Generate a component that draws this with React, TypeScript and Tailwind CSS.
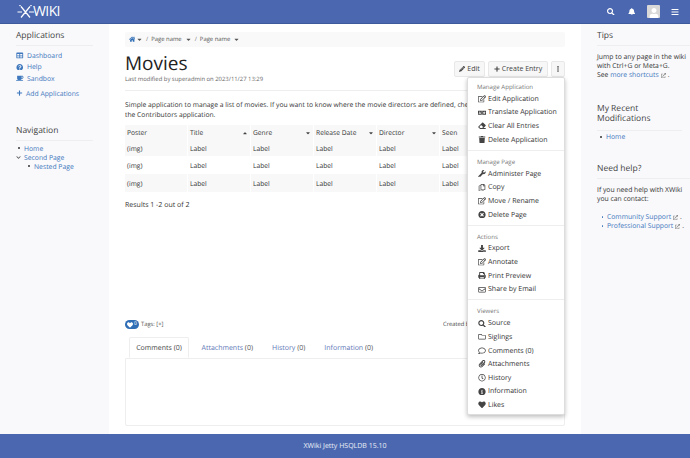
import React from 'react'
import {
  FaBars, FaBell, FaCoffee, FaDownload, FaEllipsisV, FaEraser, FaExternalLinkAlt, FaHeart, FaHome,
  FaInfoCircle, FaLanguage, FaPaperclip, FaPencilAlt, FaPlus, FaPrint, FaQuestionCircle, FaRegClock,
  FaRegComment, FaRegCopy, FaRegEdit, FaRegEnvelope, FaRegFolder, FaSearch, FaTable, FaTimesCircle,
  FaTrash, FaUser, FaWrench, FaCaretDown, FaCaretUp, FaChevronDown,
} from 'react-icons/fa'

const menu = [
  { title: 'Manage Application', items: [[FaRegEdit, 'Edit Application'], [FaLanguage, 'Translate Application'], [FaEraser, 'Clear All Entries'], [FaTrash, 'Delete Application']] },
  { title: 'Manage Page', items: [[FaWrench, 'Administer Page'], [FaRegCopy, 'Copy'], [FaRegEdit, 'Move / Rename'], [FaTimesCircle, 'Delete Page']] },
  { title: 'Actions', items: [[FaDownload, 'Export'], [FaRegEdit, 'Annotate'], [FaPrint, 'Print Preview'], [FaRegEnvelope, 'Share by Email']] },
  { title: 'Viewers', items: [[FaSearch, 'Source'], [FaRegFolder, 'Siglings'], [FaRegComment, 'Comments (0)'], [FaPaperclip, 'Attachments'], [FaRegClock, 'History'], [FaInfoCircle, 'Information'], [FaHeart, 'Likes']] },
] as const

const columns = ['Poster', 'Title', 'Genre', 'Release Date', 'Director', 'Seen']

function Logo() {
  return (
    <div className="flex items-center text-white">
      <svg width="17" height="14" viewBox="0 0 17 14" stroke="currentColor" strokeWidth="1.2" fill="none">
        <path d="M4 1.5 13 12.5M13 1.5 4 12.5M0.5 7H5M12 7h5M3.5 1 2.5 0M13.5 1l1-1" />
      </svg>
      <span className="text-[14px] leading-none tracking-[-0.6px] -ml-px">WIKI</span>
    </div>
  )
}

function PanelTitle({ children }: { children: React.ReactNode }) {
  return <h2 className="text-[8.5px] leading-[11px] text-[#444] pb-[4px] border-b border-[#eeeeee]">{children}</h2>
}

function Crumb({ label }: { label: string }) {
  return (
    <span className="flex items-center gap-[3px]">
      <span className="text-[#777]">/</span>
      <span>{label}</span>
      <FaCaretDown className="text-[7px] text-[#555]" />
    </span>
  )
}

function External() {
  return <FaExternalLinkAlt className="inline text-[5px] text-[#888] mx-[2px]" />
}

function Tab({ label, count, active }: { label: string; count: number; active?: boolean }) {
  if (active) {
    return (
      <div className="h-[21px] w-[60px] mr-[3px] pt-[4px] flex items-center justify-center bg-white border border-[#eeeeee] border-b-white rounded-t-[2px] -mb-px text-[#444]">
        {label} ({count})
      </div>
    )
  }
  return (
    <div className="h-[21px] px-[9.5px] pt-[4px] flex items-center text-[#5f78b8]">
      {label}&nbsp;<span className="text-[#555]">({count})</span>
    </div>
  )
}

export default function App() {
  return (
    <div className="h-[458px] w-[690px] flex flex-col overflow-hidden bg-white text-[7px] text-[#333] font-['Open_Sans',sans-serif] [text-rendering:geometricPrecision]">
      <header className="h-[24px] shrink-0 bg-[#4a67af] border-b border-[#3f5a9c] flex items-center pl-[17px] pr-[11px]">
        <Logo />
        <div className="ml-auto flex items-center text-white">
          <FaSearch className="text-[7.5px] mr-[13.5px]" />
          <FaBell className="text-[7.5px] mr-[11.5px]" />
          <div className="w-[13px] h-[13px] bg-[#d8d8d8] rounded-[1px] flex items-end justify-center overflow-hidden mr-[11px]">
            <FaUser className="text-[10px] text-white" />
          </div>
          <FaBars className="text-[8px]" />
        </div>
      </header>

      <div className="flex-1 flex min-h-0">
        <aside className="w-[109px] shrink-0 bg-[#f9f9fb] pl-[16px] pr-[16px] pt-[6px]">
          <PanelTitle>Applications</PanelTitle>
          <ul className="mt-[4px] text-[6.8px] text-[#3f78bd] leading-[11.3px]">
            <li className="flex items-center gap-[3.5px]"><FaTable className="w-[7.5px] text-[#3f78bd]" /><span>Dashboard</span></li>
            <li className="flex items-center gap-[3.5px]"><FaQuestionCircle className="w-[7.5px]" /><span>Help</span></li>
            <li className="flex items-center gap-[3.5px]"><FaCoffee className="w-[7.5px]" /><span>Sandbox</span></li>
          </ul>
          <div className="mt-[4px] flex items-center gap-[3px] text-[6.8px] text-[#3f78bd] leading-[11px]">
            <FaPlus className="w-[7px] text-[6px]" />Add Applications
          </div>

          <div className="mt-[26px]">
            <PanelTitle>Navigation</PanelTitle>
          </div>
          <ul className="mt-[3px] text-[6.8px] text-[#3f78bd] leading-[9px]">
            <li className="flex items-center gap-[4px] pl-[2px]"><span className="w-[2px] h-[2px] rounded-full bg-[#333]" />Home</li>
            <li className="flex items-center gap-[3px]"><FaChevronDown className="text-[5px] text-[#555]" />Second Page</li>
            <li className="flex items-center gap-[4px] pl-[12px]"><span className="w-[2px] h-[2px] rounded-full bg-[#333]" />Nested Page</li>
          </ul>
        </aside>

        <main className="relative flex-1 min-w-0 pl-[16px] pr-[16px] pt-[8px] flex flex-col">
          <nav className="h-[15px] bg-[#f9f9f9] rounded-[2px] flex items-center gap-[3px] pl-[3.5px] text-[5.9px] text-[#555]">
            <FaHome className="text-[6.5px] text-[#2f6db5]" />
            <FaCaretDown className="text-[7px] text-[#555] -ml-[2px]" />
            <Crumb label="Page name" />
            <Crumb label="Page name" />
          </nav>

          <div className="flex items-start">
            <div>
              <h1 className="text-[19px] leading-[24px] mt-[4px] text-[#222]">Movies</h1>
              <p className="text-[5.9px] leading-[9px] text-[#666]">Last modified by superadmin on 2023/11/27 13:29</p>
            </div>
            <div className="ml-auto mt-[14px] flex items-center gap-[3px] text-[#444]">
              <button className="h-[15.5px] w-[31px] flex items-center justify-center gap-[2px] bg-[#f7f7f7] border border-[#e8e8e8] rounded-[2px]">
                <FaPencilAlt className="text-[6px]" />Edit
              </button>
              <button className="h-[15.5px] w-[60px] flex items-center justify-center gap-[2px] bg-[#f7f7f7] border border-[#e8e8e8] rounded-[2px]">
                <FaPlus className="text-[6px]" />Create Entry
              </button>
              <button className="h-[15.5px] w-[14px] flex items-center justify-center bg-[#f7f7f7] border border-[#e8e8e8] rounded-[2px]">
                <FaEllipsisV className="text-[6px]" />
              </button>
            </div>
          </div>

          <div className="border-t border-[#eeeeee] mt-[6px]" />
          <p className="mt-[9px] text-[6.75px] leading-[9.5px] whitespace-nowrap overflow-hidden">
            Simple application to manage a list of movies. If you want to know where the movie directors are defined, check<br />
            the <span className="border-b border-dotted border-[#555]">Contributors</span> application.
          </p>

          <table className="mt-[6px] w-[378px] table-fixed border-separate border-spacing-0 text-[6.7px]">
            <thead>
              <tr>
                {columns.map((c, i) => (
                  <th key={c} className="h-[15px] bg-[#f8f8f8] border-r border-white pl-[2px] pr-[2px] pt-[2px] text-left font-normal">
                    <span className="flex items-center justify-between">
                      {c}
                      {i === 1 && <FaCaretUp className="text-[6px] text-[#444]" />}
                      {(i === 2 || i === 3 || i === 4) && <FaCaretDown className="text-[6px] text-[#444]" />}
                    </span>
                  </th>
                ))}
              </tr>
            </thead>
            <tbody>
              {[0, 1, 2].map((r) => (
                <tr key={r}>
                  {columns.map((c, i) => (
                    <td key={c} className={`${r === 0 ? 'h-[16px] bg-[#f8f8f8]' : r === 1 ? 'h-[18px] bg-white' : 'h-[17.5px] bg-[#f8f8f8]'} border-r border-white pl-[2px] pt-[2px]`}>
                      {i === 0 ? '(img)' : 'Label'}
                    </td>
                  ))}
                </tr>
              ))}
            </tbody>
          </table>
          <p className="mt-[9px]">Results 1 -2 out of 2</p>

          <div className="mt-auto flex items-center h-[12px] text-[5.8px]">
            <span className="h-[8.5px] w-[14px] rounded-full bg-[#2f6db5] text-white flex items-center justify-center gap-[1px] text-[5px]">
              <FaHeart className="text-[6px]" />0
            </span>
            <span className="ml-[2px] text-[#555]">Tags: [+]</span>
            <span className="ml-auto w-[122px] whitespace-nowrap overflow-hidden text-[#444]">Created by</span>
          </div>

          <div className="mt-[6.5px] pl-[4px] flex relative z-[1]">
            <Tab label="Comments" count={0} active />
            <Tab label="Attachments" count={0} />
            <Tab label="History" count={0} />
            <Tab label="Information" count={0} />
          </div>
          <div className="h-[68px] border border-[#eeeeee] rounded-b-[2px] mb-[8px]" />

          <div className="absolute left-[358px] top-[53px] w-[98px] h-[338px] z-10 bg-white border border-[#dddddd] rounded-[2px] shadow-[0_2px_4px_rgba(0,0,0,0.25)] py-[3px]">
            {menu.map((section, i) => (
              <div key={section.title} className={i > 0 ? 'border-t border-[#eeeeee] mt-[3.25px] pt-[5px]' : ''}>
                <div className="h-[11px] pl-[9px] flex items-center text-[6.1px] text-[#777]">{section.title}</div>
                {section.items.map(([Icon, label]) => (
                  <div key={label} className="h-[13.65px] pl-[9.5px] flex items-center text-[#333]">
                    <Icon className="w-[8px] text-[7.5px] text-[#444] shrink-0 mr-[2.5px]" />
                    <span className="pt-[2.5px]">{label}</span>
                  </div>
                ))}
              </div>
            ))}
          </div>
        </main>

        <aside className="w-[109px] shrink-0 bg-[#f9f9fb] pl-[16px] pt-[6px] pr-0">
          <PanelTitle>Tips</PanelTitle>
          <p className="mt-[5.5px] text-[6.8px] leading-[9.3px] whitespace-nowrap">
            Jump to any page in the wiki<br />with Ctrl+G or Meta+G.<br />
            See <span className="text-[#3f78bd]">more shortcuts</span><External />.
          </p>

          <div className="mt-[24.5px]">
            <h2 className="text-[8.5px] leading-[10.6px] text-[#444] pb-[4.5px] border-b border-[#eeeeee] mr-[8px]">My Recent<br />Modifications</h2>
          </div>
          <ul className="mt-[1.5px] text-[6.8px] leading-[10px] text-[#3f78bd]">
            <li className="flex items-center gap-[4px] pl-[3px]"><span className="w-[2px] h-[2px] rounded-full bg-[#333]" />Home</li>
          </ul>

          <div className="mt-[21px]"><PanelTitle>Need help?</PanelTitle></div>
          <p className="mt-[5.5px] text-[6.8px] leading-[9.3px] whitespace-nowrap">If you need help with XWiki<br />you can contact:</p>
          <ul className="mt-[9px] text-[6.8px] leading-[9.3px] text-[#3f78bd] whitespace-nowrap">
            <li className="flex items-center gap-[4px] pl-[4.5px]"><span className="w-[1.5px] h-[1.5px] rounded-full bg-[#3f78bd]" /><span>Community Support<External /><span className="text-[#333]">.</span></span></li>
            <li className="flex items-center gap-[4px] pl-[4.5px]"><span className="w-[1.5px] h-[1.5px] rounded-full bg-[#3f78bd]" /><span>Professional Support<External /><span className="text-[#333]">.</span></span></li>
          </ul>
        </aside>
      </div>

      <footer className="h-[24px] shrink-0 pt-[2px] bg-[#4a67af] flex items-center justify-center text-white/90">
        XWiki Jetty HSQLDB 15.10
      </footer>
    </div>
  )
}
